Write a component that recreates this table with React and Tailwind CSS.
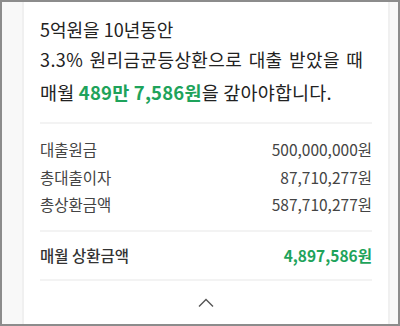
const font = { fontFamily: '"Noto Sans CJK KR", "Noto Sans", sans-serif' };

const rows = [
  ['대출원금', '500,000,000원'],
  ['총대출이자', '87,710,277원'],
  ['총상환금액', '587,710,277원'],
];

export default function App() {
  return (
    <div
      className="flex h-[326px] w-[400px] overflow-hidden border-2 border-[#8c8c8c] bg-[#f8f8f8] pl-[20px] pr-[8px]"
      style={font}
    >
      <div className="flex flex-1 flex-col border-x-2 border-[#f0f0f0] bg-white px-[16px]">
        <div className="pt-[12px] text-[18px] leading-[30px] text-[#222]">
          <p>5억원을 10년동안</p>
          <p className="tracking-[0.4px] [word-spacing:2px]">3.3% 원리금균등상환으로 대출 받았을 때</p>
          <p className="mt-[3px] text-[18.5px] tracking-[0.2px]">
            매월 <span className="font-bold text-[#1ea35b]">489만 7,586원</span>을 갚아야합니다.
          </p>
        </div>
        <div className="mt-[15px] h-[2px] bg-[#f3f3f3]" />
        <div className="flex flex-col pt-[12px] pb-[11px] text-[15.5px] leading-[27.5px] text-[#444]">
          {rows.map(([k, v]) => (
            <div key={k} className="flex justify-between">
              <span>{k}</span>
              <span>{v}</span>
            </div>
          ))}
        </div>
        <div className="h-[2px] bg-[#f3f3f3]" />
        <div className="flex items-center justify-between py-[10px] text-[15.5px] leading-[27px]">
          <span className="font-medium text-[#333]">매월 상환금액</span>
          <span className="font-bold text-[#1ea35b]">4,897,586원</span>
        </div>
        <div className="h-[2px] bg-[#f3f3f3]" />
        <div className="flex justify-center pt-[17px]">
          <svg width="16" height="10" viewBox="0 0 16 10" fill="none" stroke="#555" strokeWidth="1.4">
            <path d="M1 8.5 L8 1.5 L15 8.5" />
          </svg>
        </div>
      </div>
    </div>
  );
}
